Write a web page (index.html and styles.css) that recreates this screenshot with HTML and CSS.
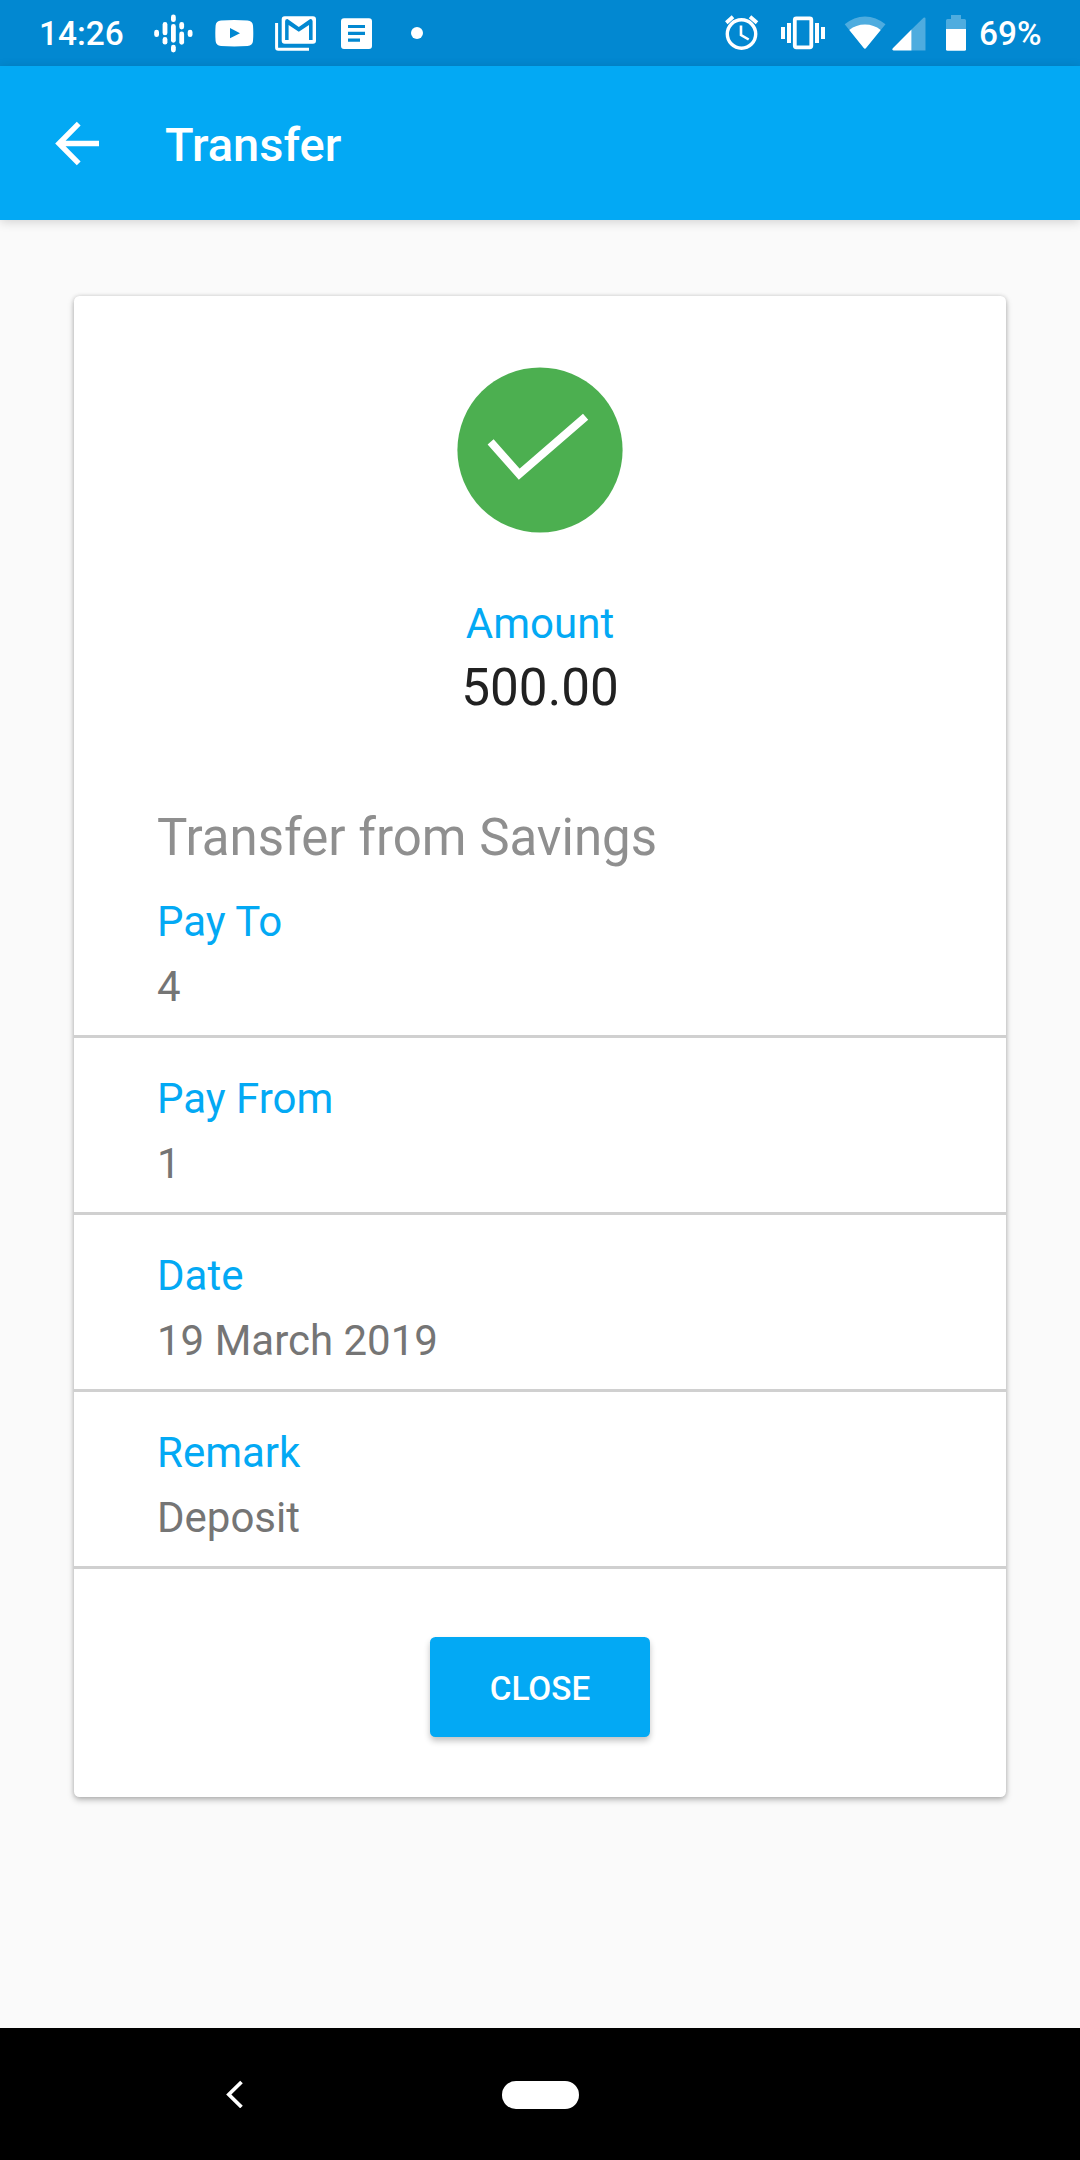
FILE: index.html
```html
<!DOCTYPE html>
<html lang="en">
<head>
<meta charset="utf-8">
<title>Transfer</title>
<link rel="stylesheet" href="styles.css">
</head>
<body>
<header class="status-bar">
  <span class="clock">14:26</span>
  <div class="notifications">
    <svg width="39" height="39" viewBox="154 14 39 39" fill="#fff">
      <rect x="154.2" y="29.7" width="4.8" height="7.4" rx="2.4"/>
      <rect x="162.6" y="22" width="4.8" height="13.3" rx="2.4"/>
      <rect x="162.6" y="37" width="4.8" height="7.6" rx="2.4"/>
      <rect x="171" y="14.5" width="4.8" height="7.6" rx="2.4"/>
      <rect x="171" y="24" width="4.8" height="18.7" rx="2.4"/>
      <rect x="171" y="44.8" width="4.8" height="7.6" rx="2.4"/>
      <rect x="179.3" y="22" width="4.8" height="7.4" rx="2.4"/>
      <rect x="179.3" y="31.6" width="4.8" height="13.1" rx="2.4"/>
      <rect x="187.7" y="29.7" width="4.8" height="7.4" rx="2.4"/>
    </svg>
    <svg class="video" width="39" height="27" viewBox="215 20 39 27">
      <path fill="#fff" fill-rule="evenodd" d="M221 20.4Q234.300 19.600 247.500 20.400Q252.600 20.800 253 25.500Q253.600 33.200 253 41Q252.600 45.600 247.500 46Q234.300 46.900 221 46Q216 45.600 215.600 41Q215 33.200 215.600 25.500Q216 20.800 221 20.400ZM230 28V38.300L240 33.200Z"/>
    </svg>
    <svg class="mail" width="42" height="36" viewBox="275 16 42 36">
      <path d="M276.600 23V47.500Q276.600 49.200 278.300 49.200H309" fill="none" stroke="#fff" stroke-width="3"/>
      <path fill="#fff" fill-rule="evenodd" d="M284.700 16.200H313Q316 16.200 316 19.200V40.700Q316 43.700 313 43.700H284.700Q281.700 43.700 281.700 40.700V19.200Q281.700 16.200 284.700 16.200ZM287.500 19L298.800 27L310.200 19Q312.600 19 312.600 21.300V40H309V25L298.800 31.700L288.600 25V40H285.100V21.300Q285.100 19 287.500 19Z"/>
    </svg>
    <svg class="doc" width="31" height="31" viewBox="341 18 31 31">
      <path fill="#fff" fill-rule="evenodd" d="M344 18.200H369Q372 18.200 372 21.200V46Q372 49 369 49H344Q341 49 341 46V21.200Q341 18.200 344 18.200ZM348 25V28H365V25ZM348 31.700V35H365V31.700ZM348 38.500V41.700H360V38.500Z"/>
    </svg>
    <span class="more"></span>
  </div>
  <div class="system">
    <svg width="34" height="36" viewBox="725 15 34 36" fill="none" stroke="#fff">
      <circle cx="741.500" cy="34" r="14.200" stroke-width="3.400"/>
      <path d="M741 25.500V35L748.700 39.500" stroke-width="2.600"/>
      <path d="M726.300 22.700L733 16.800M750 16.800L757 22.700" stroke-width="3.800"/>
    </svg>
    <svg class="vibrate" width="44" height="34" viewBox="781 16 44 34">
      <path fill="#fff" d="M781 27h4v12h-4zM787 23h4v20h-4zM815 23h4v20h-4zM821 27h4v12h-4z"/>
      <rect x="794.800" y="18.300" width="16.500" height="29" rx="1.500" fill="none" stroke="#fff" stroke-width="3.800"/>
    </svg>
    <svg class="wifi" width="42" height="34" viewBox="843.500 15.500 42 34" fill="#fff">
      <path fill-opacity=".3" d="M844.200 23.800Q853.500 15.900 864.500 15.900T885 23.800L865.500 47.600Q864.500 49 863.300 47.600Z"/>
      <path d="M848.800 29.500Q855.500 24 864.500 24T880.200 29.500L865.500 47.600Q864.500 49 863.300 47.600Z"/>
    </svg>
    <svg class="cell" width="34" height="34" viewBox="891.500 16.500 34 34" fill="#fff">
      <path fill-opacity=".3" d="M911 29L923 17.300Q925 16.200 925 18.300V50H911Z"/>
      <path d="M911 29V50H893Q891 49.700 892.300 47.800Z"/>
    </svg>
    <svg class="battery" width="20" height="36" viewBox="946 15 20 36" fill="#fff">
      <path fill-opacity=".3" d="M951 15h10v4h3.500q1.500 0 1.500 1.500V29h-20v-8.500q0-1.500 1.500-1.500h3.500z"/>
      <path d="M946 29h20v20.300q0 1.500-1.500 1.500h-17q-1.500 0-1.500-1.500z"/>
    </svg>
    <span class="percent">69%</span>
  </div>
</header>
<div class="toolbar">
  <svg width="45" height="45" viewBox="55 120.500 45 45" fill="none" stroke="#fff" stroke-width="5.400">
    <path d="M78.700 123.200L59 143L78.700 162.800M58.500 143H99"/>
  </svg>
  <h1>Transfer</h1>
</div>
<main class="content">
  <section class="card">
    <svg class="success" width="166" height="166" viewBox="457 367 166 166">
      <circle cx="540" cy="450" r="82.600" fill="#4caf50"/>
      <path d="M490.600 441.800L519.200 474.200L585.600 416.800" fill="none" stroke="#fff" stroke-width="8"/>
    </svg>
    <div class="amount-label">Amount</div>
    <div class="amount">500.00</div>
    <h2>Transfer from Savings</h2>
    <dl>
      <div class="row"><dt>Pay To</dt><dd>4</dd></div>
      <div class="row"><dt>Pay From</dt><dd>1</dd></div>
      <div class="row"><dt>Date</dt><dd>19 March 2019</dd></div>
      <div class="row"><dt>Remark</dt><dd>Deposit</dd></div>
    </dl>
    <button type="button" class="close">CLOSE</button>
  </section>
</main>
<nav class="nav-bar">
  <svg width="18" height="28" viewBox="226 2080 18 28" fill="none" stroke="#fff" stroke-width="3.700">
    <path d="M241.500 2082L228.800 2094.500L241.500 2107"/>
  </svg>
  <span class="home"></span>
</nav>
</body>
</html>
```

FILE: styles.css
```css
* { box-sizing: border-box; margin: 0; padding: 0; }
body {
  width: 1080px;
  height: 2160px;
  display: flex;
  flex-direction: column;
  background: #fafafa;
  font-family: Roboto, sans-serif;
  overflow: hidden;
}
svg { display: block; flex: none; }

.status-bar {
  height: 66px;
  flex: none;
  display: flex;
  background: #0288d1;
  color: #fff;
  font-size: 33.4px;
  font-weight: 500;
  line-height: 68px;
}
.clock { width: 115px; margin-left: 39px; }
.notifications { display: flex; align-items: flex-start; padding-top: 14px; }
.video { margin: 6px 0 0 22px; }
.mail { margin: 2px 0 0 21px; }
.doc { margin: 4px 0 0 24px; }
.more {
  width: 12px;
  height: 12px;
  margin: 13px 0 0 39px;
  border-radius: 50%;
  background: #fff;
}
.system {
  display: flex;
  align-items: flex-start;
  margin-left: auto;
  padding: 15px 39px 0 0;
}
.vibrate { margin: 1px 0 0 22px; }
.wifi { margin: 0.5px 0 0 18.5px; }
.cell { margin: 1.5px 0 0 6px; }
.battery { margin-left: 20.5px; }
.percent { width: 62px; margin: -15px 0 0 13px; white-space: nowrap; }

.toolbar {
  height: 154px;
  flex: none;
  display: flex;
  align-items: center;
  gap: 65px;
  padding-left: 55px;
  background: #03a9f4;
  box-shadow: 0 2px 10px rgba(0, 0, 0, 0.16);
  color: #fff;
}
.toolbar h1 { font-size: 47px; font-weight: 500; line-height: 56px; padding-top: 4px; }

.content { flex: 1; padding: 76px 74px 0; }
.card {
  height: 1501px;
  display: flex;
  flex-direction: column;
  padding-top: 71px;
  border-radius: 5.5px;
  background: #fff;
  box-shadow: 0 3px 6px rgba(0, 0, 0, 0.26), 0 0 4px rgba(0, 0, 0, 0.14);
}
.success { align-self: center; }
.amount-label {
  margin-top: 67px;
  color: #03a9f4;
  font-size: 42px;
  line-height: 48px;
  text-align: center;
}
.amount {
  padding-top: 2px;
  color: #212121;
  font-size: 51.2px;
  line-height: 76px;
  text-align: center;
}
.card h2 {
  margin-top: 82px;
  padding-left: 83px;
  color: #8f8f8f;
  font-size: 51px;
  font-weight: 400;
  line-height: 60px;
}
.row {
  padding: 37px 83px 24px;
  border-bottom: 3px solid #d0d0d0;
  font-size: 42px;
  line-height: 48px;
}
.row:first-child { padding-top: 30px; }
.row dt { color: #03a9f4; }
.row dd { margin-top: 17px; color: #757575; }
.close {
  width: 220px;
  height: 100px;
  align-self: center;
  margin-top: 68px;
  padding-top: 2px;
  border: 0;
  border-radius: 5.5px;
  background: #03a9f4;
  box-shadow: 0 4px 6px rgba(0, 0, 0, 0.24);
  color: #fff;
  font: 500 33.3px Roboto, sans-serif;
}

.nav-bar {
  height: 132px;
  flex: none;
  display: flex;
  align-items: center;
  padding-left: 226px;
  background: #000;
}
.home {
  width: 77px;
  height: 28px;
  margin: 1px 0 0 258px;
  border-radius: 14px;
  background: #fff;
}
```
